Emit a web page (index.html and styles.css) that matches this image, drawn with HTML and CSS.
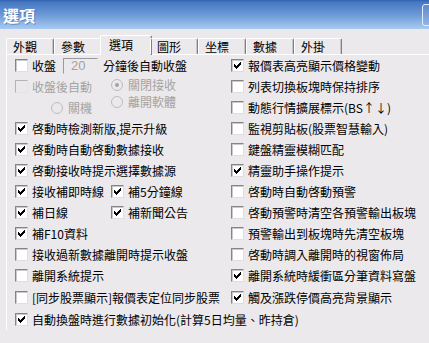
FILE: index.html
```html
<!DOCTYPE html>
<html lang="zh-Hant">
<head>
    <meta charset="UTF-8">
    <meta name="viewport" content="width=device-width, initial-scale=1.0">
    <title>選項</title>
    <link rel="stylesheet" href="styles.css">
</head>
<body>
    <div class="window">
        <div class="titlebar">
            <h1>選項</h1>
            <span class="tb-btn"></span>
        </div>
        <div class="body">
            <ul class="tabs">
                <li>外觀</li>
                <li>參數</li>
                <li class="active">選項</li>
                <li>圖形</li>
                <li>坐標</li>
                <li>數據</li>
                <li>外掛</li>
            </ul>
            <div class="panel">
                <div class="cols">
                    <div class="col left">
                        <div class="opt">
                            <span class="box"></span>收盤
                            <span class="num">20</span>
                            <span class="after">分鐘後自動收盤</span>
                        </div>
                        <div class="close-block">
                            <div class="close-left">
                                <div class="opt disabled"><span class="box"></span>收盤後自動</div>
                                <div class="opt disabled shutdown"><span class="radio"></span>關機</div>
                            </div>
                            <div class="close-right">
                                <div class="opt disabled small"><span class="radio on"></span>關閉接收</div>
                                <div class="opt disabled small"><span class="radio"></span>離開軟體</div>
                            </div>
                        </div>
                        <div class="opt"><span class="box on"></span>啓動時檢測新版,提示升級</div>
                        <div class="opt"><span class="box on"></span>啓動時自動啓動數據接收</div>
                        <div class="opt"><span class="box on"></span>啓動接收時提示選擇數據源</div>
                        <div class="pair">
                            <div class="opt"><span class="box on"></span>接收補即時線</div>
                            <div class="opt"><span class="box on"></span>補5分鐘線</div>
                        </div>
                        <div class="pair">
                            <div class="opt"><span class="box on"></span>補日線</div>
                            <div class="opt"><span class="box on"></span>補新聞公告</div>
                        </div>
                        <div class="opt"><span class="box on"></span>補F10資料</div>
                        <div class="opt"><span class="box"></span>接收過新數據離開時提示收盤</div>
                        <div class="opt"><span class="box"></span>離開系統提示</div>
                        <div class="opt gap"><span class="box"></span>[同步股票顯示]報價表定位同步股票</div>
                    </div>
                    <div class="col right">
                        <div class="opt"><span class="box on"></span>報價表高亮顯示價格變動</div>
                        <div class="opt"><span class="box"></span>列表切換板塊時保持排序</div>
                        <div class="opt"><span class="box"></span>動態行情擴展標示(BS↑↓)</div>
                        <div class="opt"><span class="box"></span>監視剪貼板(股票智慧輸入)</div>
                        <div class="opt"><span class="box"></span>鍵盤精靈模糊匹配</div>
                        <div class="opt"><span class="box on"></span>精靈助手操作提示</div>
                        <div class="opt"><span class="box"></span>啓動時自動啓動預警</div>
                        <div class="opt"><span class="box"></span>啓動預警時清空各預警輸出板塊</div>
                        <div class="opt"><span class="box"></span>預警輸出到板塊時先清空板塊</div>
                        <div class="opt"><span class="box"></span>啓動時調入離開時的視窗佈局</div>
                        <div class="opt"><span class="box on"></span>離開系統時緩衝區分筆資料寫盤</div>
                        <div class="opt gap"><span class="box on"></span>觸及漲跌停價高亮背景顯示</div>
                    </div>
                </div>
                <div class="opt gap"><span class="box on"></span>自動換盤時進行數據初始化(計算5日均量、昨持倉)</div>
            </div>
        </div>
    </div>
</body>
</html>
```

FILE: styles.css
```css
body {
    margin: 0;
    font-family: "Noto Sans CJK TC", "Liberation Sans", sans-serif;
    font-size: 12px;
    color: #000;
    background-color: #ece9ec;
}
.window {
    width: 429px;
    height: 343px;
    overflow: hidden;
    background-color: #ece9ec;
}
.titlebar {
    height: 29px;
    display: flex;
    align-items: center;
    justify-content: space-between;
    background: linear-gradient(#2f62b0 0, #4677c0 2px, #6b98d6 50%, #a7cbf1 100%);
}
.titlebar h1 {
    margin: 0 0 0 3px;
    font-size: 16px;
    font-weight: bold;
    color: #fff;
    line-height: 1;
    text-shadow: 1px 1px 0 rgba(20, 50, 110, 0.35);
}
.tb-btn {
    width: 20px;
    height: 20px;
    margin-right: -15px;
    border: 1px solid #e6eefa;
    border-radius: 3px;
    background: linear-gradient(#5c8ad0, #8fb6e8);
}
.body {
    padding: 6px 0 0 6px;
}
.tabs {
    list-style: none;
    margin: 0;
    padding: 0;
    display: flex;
    align-items: flex-end;
    height: 19px;
    position: relative;
    z-index: 1;
}
.tabs li {
    box-sizing: border-box;
    width: 48px;
    height: 16px;
    padding-left: 6px;
    line-height: 15px;
    border-top: 1px solid #fff;
    border-left: 1px solid #fff;
    border-right: 1px solid #808080;
    border-radius: 2px 2px 0 0;
    box-shadow: inset -1px 0 0 #c8c6c8;
}
.tabs li.active {
    width: 52px;
    height: 20px;
    margin: 0 -2px -1px;
    padding-left: 8px;
    line-height: 17px;
    background-color: #ece9ec;
}
.panel {
    border-top: 1px solid #fff;
    border-left: 1px solid #fff;
    padding-left: 8px;
}
.cols {
    display: flex;
}
.col.left {
    width: 216px;
}
.opt {
    display: flex;
    align-items: center;
    height: 21px;
    white-space: nowrap;
}
.opt.gap {
    margin-top: 1px;
}
.opt.small {
    height: 17px;
}
.opt.disabled {
    color: #a3a3a3;
}
.box {
    box-sizing: border-box;
    width: 13px;
    height: 13px;
    margin-right: 4px;
    flex: none;
    background-color: #fff;
    border: 1px solid;
    border-color: #858585 #dedede #dedede #858585;
    box-shadow: inset 1px 1px 0 #c9c9c9;
    display: flex;
    align-items: center;
    justify-content: center;
}
.box.on::after {
    content: "";
    width: 7px;
    height: 7px;
    background: url("data:image/svg+xml,%3Csvg xmlns='http://www.w3.org/2000/svg' width='7' height='7'%3E%3Cpath d='M0 2h1v1h1v1h1v-1h1v-1h1v-1h1v-1h1v3h-1v1h-1v1h-1v1h-1v1h-1v-1h-1v-1h-1v-1h-1z' fill='%23000'/%3E%3C/svg%3E") no-repeat;
}
.disabled .box {
    background-color: #ece9ec;
    border-color: #b4b4b4 #e4e4e4 #e4e4e4 #b4b4b4;
    box-shadow: none;
}
.num {
    box-sizing: border-box;
    width: 35px;
    height: 16px;
    margin-left: 7px;
    margin-right: 5px;
    padding-left: 7px;
    border: 1px solid;
    border-color: #9a9a9a #e8e8e8 #e8e8e8 #9a9a9a;
    font-family: "Liberation Sans", sans-serif;
    font-size: 13px;
    line-height: 14px;
    color: #a3a3a3;
}
.close-block {
    display: flex;
    height: 42px;
}
.close-left {
    width: 96px;
}
.shutdown {
    padding-left: 36px;
}
.radio {
    box-sizing: border-box;
    width: 12px;
    height: 12px;
    margin-right: 5px;
    flex: none;
    border-radius: 50%;
    border: 1px solid #bdbdbd;
    background-color: #ece9ec;
    display: flex;
    align-items: center;
    justify-content: center;
}
.radio.on::after {
    content: "";
    width: 4px;
    height: 4px;
    border-radius: 50%;
    background-color: #a3a3a3;
}
.pair {
    display: grid;
    grid-template-columns: 96px 1fr;
}
```
